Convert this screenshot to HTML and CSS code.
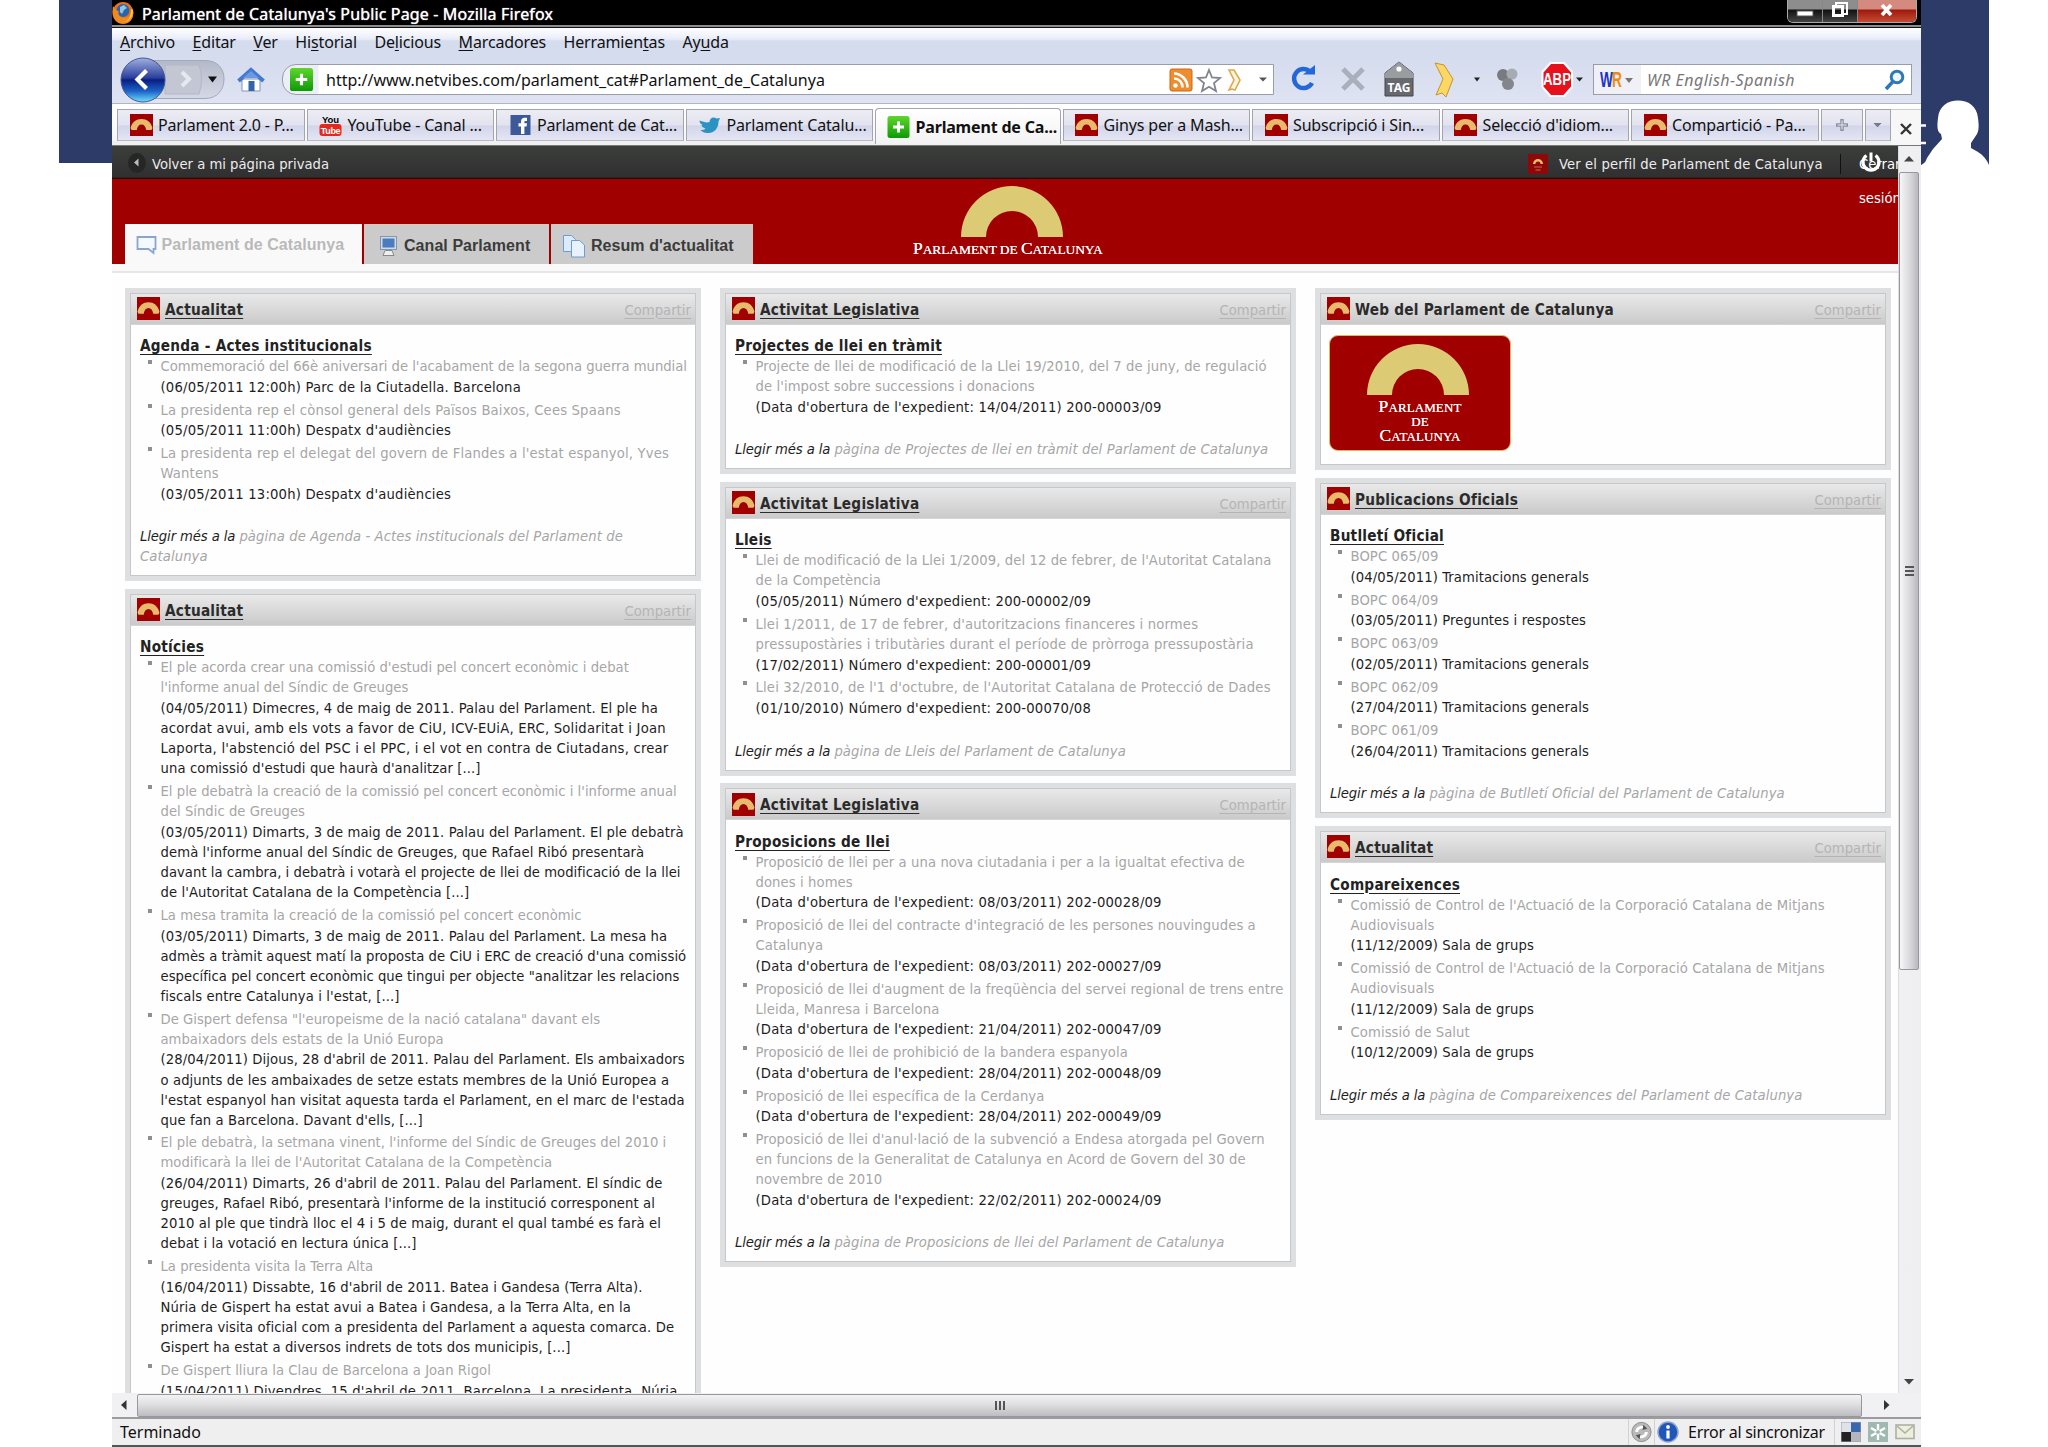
FILE: index.html
```html
<!DOCTYPE html>
<html lang="ca">
<head>
<meta charset="utf-8">
<title>Parlament de Catalunya's Public Page</title>
<link rel="stylesheet" href="styles.css">
</head>
<body>
<svg class="defs" aria-hidden="true">
  <defs>
    <linearGradient id="gBack" x1="0" y1="0" x2="0" y2="1"><stop offset="0" stop-color="#9fb0e0"/><stop offset=".45" stop-color="#2b3f9c"/><stop offset=".5" stop-color="#0a1d82"/><stop offset=".75" stop-color="#1b62c8"/><stop offset="1" stop-color="#6fe0fb"/></linearGradient>
    <linearGradient id="gPill" x1="0" y1="0" x2="0" y2="1"><stop offset="0" stop-color="#b4b9c9"/><stop offset="1" stop-color="#d5d9e6"/></linearGradient>
    <linearGradient id="gGreen" x1="0" y1="0" x2="0" y2="1"><stop offset="0" stop-color="#5fd62c"/><stop offset="1" stop-color="#0d9a06"/></linearGradient>
    <symbol id="arch" viewBox="0 0 22 22" preserveAspectRatio="none"><rect width="22" height="22" fill="#a00000"/><path d="M.5 14C2 8 6 5 11 5S20 8 21.500 14L20.500 16H15.500C15 12.500 13.500 10.500 11 10.500S7 12.500 6.500 16H1.500Z" fill="#e8ba6c"/></symbol>
    <symbol id="plus" viewBox="0 0 22 22"><rect width="22" height="22" rx="2.500" fill="url(#gGreen)"/><path d="M11 5.500v11M5.500 11h11" stroke="#fff" stroke-width="3"/></symbol>
    <symbol id="logo" viewBox="0 0 102 51" preserveAspectRatio="none"><path d="M0 51a51 51 0 0 1 102 0H77a26 26 0 0 0-52 0Z" fill="#dccb74"/></symbol>
  </defs>
</svg>

<div class="band band-left"></div>
<div class="band band-right">
  <svg class="person" viewBox="0 0 68 67" width="68" height="67"><path d="M0 67C4 65 5 63 6 60L12 51 21 41 20 36C16 34 16 28 17 20 18 8 27 2.500 37 2.500S56 8 57 20C58 28 58 32 56 36L50 45 50 50 57 54C62 57 66 62 68 67Z" fill="#fff"/><path d="M0 27.500h5M0 45h5" stroke="#fff" stroke-width="2.500"/></svg>
</div>

<main class="window">
  <header class="titlebar">
    <svg class="fox" width="22" height="24" viewBox="0 0 22 24"><ellipse cx="11" cy="12" rx="10.500" ry="11" fill="#e8731a"/><circle cx="11" cy="9.500" r="6.500" fill="#2b63ad"/><path d="M8 6l4-2 3 3-3 2-2 4-2-2z" fill="#8fc6e8"/><path d="M1 5C-1 17 5 23 12 22.500S22 17 21 9C19 15 16 17 12 16.500 8 17 5 13 7 10 4 10 3 8 1 5Z" fill="#f08a1e"/><path d="M21 9c0 8-5 12-9 12 4-1 7-5 7-13z" fill="#f9c440"/></svg>
    <h1>Parlament de Catalunya's Public Page - Mozilla Firefox</h1>
    <div class="winbtns">
      <span class="wb"><svg width="34" height="21" viewBox="0 0 34 21"><rect x="9" y="11" width="16" height="5" fill="#fff" stroke="#555"/></svg></span>
      <span class="wb"><svg width="34" height="21" viewBox="0 0 34 21"><path d="M13 6V3h11v11h-3" fill="none" stroke="#fff" stroke-width="2"/><rect x="10.500" y="6.500" width="9" height="9" fill="none" stroke="#fff" stroke-width="3"/></svg></span>
      <span class="wb wb-close"><svg width="58" height="21" viewBox="0 0 58 21"><path d="M24 5l9 10M33 5L24 15" stroke="#fff" stroke-width="3.600"/></svg></span>
    </div>
  </header>

  <nav class="menubar">
    <span><u>A</u>rchivo</span><span><u>E</u>ditar</span><span><u>V</u>er</span><span>Hi<u>s</u>torial</span><span>De<u>l</u>icious</span><span><u>M</u>arcadores</span><span>Herramien<u>t</u>as</span><span>Ay<u>u</u>da</span>
  </nav>

  <div class="toolbar">
    <svg class="backfwd" width="110" height="46" viewBox="0 0 110 46"><path d="M20 3.500H88C101 3.500 107 12 107 22S101 41.500 88 41.500H20Z" fill="url(#gPill)" stroke="#a3a8b8"/><path d="M48 8H82Q87 22 82 37H48Z" fill="#c3c7d3" stroke="#b4b8c6"/><path d="M65 15l7 7-7 7" fill="none" stroke="#e6e8ef" stroke-width="4"/><path d="M91 19.500h9l-4.500 6z" fill="#111"/><circle cx="26" cy="23" r="22" fill="url(#gBack)" stroke="#46558f"/><path d="M29.500 13.500L20.500 22.500l9 9" fill="none" stroke="#fff" stroke-width="4.200"/></svg>
    <svg class="home" width="28" height="26" viewBox="0 0 28 26"><path d="M5 12h18v12H5z" fill="#fff" stroke="#8794b5"/><path d="M1.500 14L14 3l12.500 11" fill="none" stroke="#4379cf" stroke-width="4"/><path d="M6 11l8-7 8 7z" fill="#6c9ae2"/><path d="M11.500 14h6v10h-6z" fill="#3366a8"/></svg>
    <div class="urlbar">
      <svg width="23" height="23"><use href="#plus"/></svg>
      <span class="url">http://www.netvibes.com/parlament_cat#Parlament_de_Catalunya</span>
      <svg class="urlicons" width="102" height="26" viewBox="0 0 102 26"><rect x="1" y="2" width="22" height="22" rx="2" fill="#ee8c2e" stroke="#c96a14"/><circle cx="6.500" cy="18.500" r="2.200" fill="#fff"/><path d="M5 11.500a8.500 8.500 0 0 1 8.500 9M5 6.500A14 14 0 0 1 18.500 20.500" fill="none" stroke="#fff" stroke-width="2.600"/><path d="M40 3l3 7.500 8 .6-6 5 2 7.900-7-4.300-7 4.300 2-7.900-6-5 8-.6z" fill="#fff" stroke="#80848c" stroke-width="1.800"/><path d="M60 3h5l6 10-5 10-3-1-3 1 5-10z" fill="#fff8e0" stroke="#dba84a" stroke-width="1.600"/><path d="M90 10.500h8l-4 4z" fill="#555"/></svg>
    </div>
    <svg class="tools" width="292" height="46" viewBox="0 0 292 46"><path d="M27 14.500A9.500 9.500 0 1 0 29 26" fill="none" stroke="#2368d8" stroke-width="4.500"/><path d="M20 17.500H32V8z" fill="#2368d8"/><path d="M60 12l20 20M80 12L60 32" stroke="#a9afbb" stroke-width="5"/><path d="M102 16l14-11 14 11v23h-28z" fill="#66696d" stroke="#44474b"/><path d="M102 16l14-11 14 11v5h-28z" fill="#9a9da0"/><circle cx="116" cy="12" r="2.600" fill="#fff"/><text x="116" y="35" class="t-tag">TAG</text><path d="M152 6l9 2 9 14-7 18-4-4-6 2 7-16z" fill="#fbd766" stroke="#c79428"/><path d="M191 20.500h6l-3 4z" fill="#222"/><circle cx="220" cy="18" r="6" fill="#777b80"/><circle cx="229" cy="17" r="5.500" fill="#a7abb2"/><circle cx="225" cy="27" r="6" fill="#83878c"/><path d="M267.500 6h13.500l8 9v15l-8 9h-13.500l-8-9V15z" fill="#e8101a" stroke="#fff" stroke-width="2"/><text x="274" y="28" class="t-abp" textLength="28" lengthAdjust="spacingAndGlyphs">ABP</text></svg>
    <svg class="drop" width="10" height="46" viewBox="0 0 10 46"><path d="M1 20.500h7l-3.500 4z" fill="#222"/></svg>
    <div class="search">
      <span class="engine"><b class="w">W</b><b class="r">R</b><svg width="10" height="8" viewBox="0 0 10 8"><path d="M1 2h8L5 7z" fill="#777"/></svg></span>
      <span class="ph">WR English-Spanish</span>
      <svg class="mag" width="22" height="22" viewBox="0 0 22 22"><circle cx="13" cy="8" r="5.800" fill="#eef6fd" stroke="#2f78b8" stroke-width="3"/><path d="M9 12.500L2 20" stroke="#2f78b8" stroke-width="3.600"/></svg>
    </div>
  </div>

  <div class="tabs">
    <div class="tab"><svg><use href="#arch"/></svg>Parlament 2.0 - P...</div>
    <div class="tab"><svg viewBox="0 0 22 22"><rect y="10" width="22" height="12" rx="3" fill="#e4281c"/><text x="11" y="8.500" class="t-you">You</text><text x="11" y="20" class="t-tube">Tube</text></svg>YouTube - Canal ...</div>
    <div class="tab"><svg viewBox="0 0 22 22"><rect x="1" y="1" width="20" height="20" fill="#3c5a99"/><path d="M11.500 20v-7.500H9V9.300h2.500V7.500C11.500 5 13 3.800 15 3.800h2.500v3.100h-1.600c-.8 0-1 .4-1 1v1.400h2.600l-.4 3.200h-2.200V20z" fill="#fff"/></svg>Parlament de Cat...</div>
    <div class="tab"><svg viewBox="0 0 22 22"><path d="M1 6.500C5 8 8 9 11 8c0-4 4-6 7-3.500L21.500 4 20 7.500C20 15 15 19.500 9 19 5.500 19 3 17.500 2 16c2.500 0 4-.6 5-1.600C4.500 14 3 12 3 11l1.500 0C2 10 1 8.500 1 6.500Z" fill="#2b93c4"/></svg>Parlament Catalu...</div>
    <div class="tab active"><svg><use href="#plus"/></svg>Parlament de Ca...</div>
    <div class="tab"><svg><use href="#arch"/></svg>Ginys per a Mash...</div>
    <div class="tab"><svg><use href="#arch"/></svg>Subscripció i Sin...</div>
    <div class="tab"><svg><use href="#arch"/></svg>Selecció d'idiom...</div>
    <div class="tab"><svg><use href="#arch"/></svg>Compartició - Pa...</div>
    <div class="tab mini new"><svg viewBox="0 0 14 14"><path d="M7 1v12M1 7h12" stroke="#8c90a0" stroke-width="3.500"/><path d="M7 2.500v9M2.500 7h9" stroke="#e4e6f0" stroke-width="1"/></svg></div>
    <div class="tab mini list"><svg viewBox="0 0 10 6"><path d="M0 0h10L5 5z" fill="#777b88"/></svg></div>
    <div class="closetab"><svg width="12" height="12" viewBox="0 0 12 12"><path d="M1 1l10 10M11 1L1 11" stroke="#333" stroke-width="2.400"/></svg></div>
  </div>

  <div class="view">
    <section class="page">
      <div class="netbar">
        <svg class="prev" width="20" height="24" viewBox="0 0 20 24"><ellipse cx="10" cy="12" rx="9" ry="10" fill="#262626"/><path d="M11.500 7.500v8L7 11.500z" fill="#bbb"/></svg>
        <span>Volver a mi página privada</span>
        <svg class="profile" width="20" height="20" viewBox="0 0 20 20"><rect width="20" height="20" fill="#8e0808"/><path d="M5 10a5 5 0 0 1 10 0h-2.500a2.500 2.500 0 0 0-5 0z" fill="#e8ba6c"/><path d="M6 13h8M7.500 16h5" stroke="#b34a3c" stroke-width="1.300"/></svg>
        <span class="pl">Ver el perfil de Parlament de Catalunya</span>
        <span class="logout"><svg width="22" height="22" viewBox="0 0 22 22"><path d="M6.500 4.500a8 8 0 1 0 9 0" fill="none" stroke="#fff" stroke-width="3.200"/><path d="M11 1.500v9" stroke="#fff" stroke-width="3"/></svg>Cerrar<br>sesión</span>
      </div>
      <div class="hero">
        <div class="ptab on"><svg width="22" height="20" viewBox="0 0 22 20"><path d="M1.500 2h18v12h-2v4l-5-4h-11z" fill="#f4f9ff" stroke="#8aa6cf" stroke-width="1.800"/></svg>Parlament de Catalunya</div>
        <div class="ptab"><svg width="20" height="22" viewBox="0 0 20 22"><rect x="1.500" y="1.500" width="16" height="13" fill="#cfdbe9" stroke="#8496ad"/><rect x="3.500" y="3.500" width="12" height="9" fill="#4b7cc0"/><path d="M4 20.500l2-5h7l2 5z" fill="#eee" stroke="#888"/></svg>Canal Parlament</div>
        <div class="ptab"><svg width="24" height="24" viewBox="0 0 24 24"><path d="M1.500 1.500h8l4 4v12h-12z" fill="#dcebfb" stroke="#6f9bd0"/><path d="M9.500 6.500h8l5 4.500v12h-13z" fill="#e8f2fd" stroke="#6f9bd0"/></svg>Resum d'actualitat</div>
        <div class="brand"><svg width="102" height="51"><use href="#logo"/></svg><span class="sc">P<small>ARLAMENT DE </small>C<small>ATALUNYA</small></span></div>
      </div>
      <div class="strip"></div>

      <div class="cols">
        <div class="col">
          <article class="card">
            <h2><svg><use href="#arch"/></svg><u>Actualitat</u><a>Compartir</a></h2>
            <h3>Agenda - Actes institucionals</h3>
            <ul>
              <li><a class="tight">Commemoració del 66è aniversari de l'acabament de la segona guerra mundial</a><p class="d">(06/05/2011 12:00h) Parc de la Ciutadella. Barcelona</p></li>
              <li><a class="loose">La presidenta rep el cònsol general dels Països Baixos, Cees Spaans</a><p class="d">(05/05/2011 11:00h) Despatx d'audiències</p></li>
              <li><a class="loose">La presidenta rep el delegat del govern de Flandes a l'estat espanyol, Yves<br>Wantens</a><p class="d">(03/05/2011 13:00h) Despatx d'audiències</p></li>
            </ul>
            <p class="more">Llegir més a la <a>pàgina de Agenda - Actes institucionals del Parlament de<br>Catalunya</a></p>
          </article>
          <article class="card news">
            <h2><svg><use href="#arch"/></svg><u>Actualitat</u><a>Compartir</a></h2>
            <h3>Notícies</h3>
            <ul>
              <li><a>El ple acorda crear una comissió d'estudi pel concert econòmic i debat<br>l'informe anual del Síndic de Greuges</a><p>(04/05/2011) Dimecres, 4 de maig de 2011. Palau del Parlament. El ple ha<br><span class="loose">acordat avui, amb els vots a favor de CiU, ICV-EUiA, ERC, Solidaritat i Joan<br>Laporta, l'abstenció del PSC i el PPC, i el vot en contra de Ciutadans, crear</span><br>una comissió d'estudi que haurà d'analitzar [...]</p></li>
              <li><a>El ple debatrà la creació de la comissió pel concert econòmic i l'informe anual<br>del Síndic de Greuges</a><p>(03/05/2011) Dimarts, 3 de maig de 2011. Palau del Parlament. El ple debatrà<br>demà l'informe anual del Síndic de Greuges, que Rafael Ribó presentarà<br><span class="tight">davant la cambra, i debatrà i votarà el projecte de llei de modificació de la llei</span><br>de l'Autoritat Catalana de la Competència [...]</p></li>
              <li><a>La mesa tramita la creació de la comissió pel concert econòmic</a><p>(03/05/2011) Dimarts, 3 de maig de 2011. Palau del Parlament. La mesa ha<br><span class="tight">admès a tràmit aquest matí la proposta de CiU i ERC de creació d'una comissió<br>específica pel concert econòmic que tingui per objecte "analitzar les relacions</span><br>fiscals entre Catalunya i l'estat, [...]</p></li>
              <li><a>De Gispert defensa "l'europeisme de la nació catalana" davant els<br>ambaixadors dels estats de la Unió Europa</a><p>(28/04/2011) Dijous, 28 d'abril de 2011. Palau del Parlament. Els ambaixadors<br>o adjunts de les ambaixades de setze estats membres de la Unió Europea a<br>l'estat espanyol han visitat aquesta tarda el Parlament, en el marc de l'estada<br>que fan a Barcelona. Davant d'ells, [...]</p></li>
              <li><a>El ple debatrà, la setmana vinent, l'informe del Síndic de Greuges del 2010 i<br>modificarà la llei de l'Autoritat Catalana de la Competència</a><p>(26/04/2011) Dimarts, 26 d'abril de 2011. Palau del Parlament. El síndic de<br>greuges, Rafael Ribó, presentarà l'informe de la institució corresponent al<br>2010 al ple que tindrà lloc el 4 i 5 de maig, durant el qual també es farà el<br>debat i la votació en lectura única [...]</p></li>
              <li><a>La presidenta visita la Terra Alta</a><p>(16/04/2011) Dissabte, 16 d'abril de 2011. Batea i Gandesa (Terra Alta).<br>Núria de Gispert ha estat avui a Batea i Gandesa, a la Terra Alta, en la<br>primera visita oficial com a presidenta del Parlament a aquesta comarca. De<br>Gispert ha estat a diversos indrets de tots dos municipis, [...]</p></li>
              <li><a>De Gispert lliura la Clau de Barcelona a Joan Rigol</a><p class="d">(15/04/2011) Divendres, 15 d'abril de 2011. Barcelona. La presidenta, Núria</p></li>
            </ul>
          </article>
        </div>

        <div class="col">
          <article class="card">
            <h2><svg><use href="#arch"/></svg><u>Activitat Legislativa</u><a>Compartir</a></h2>
            <h3>Projectes de llei en tràmit</h3>
            <ul>
              <li><a>Projecte de llei de modificació de la Llei 19/2010, del 7 de juny, de regulació<br>de l'impost sobre successions i donacions</a><p class="d">(Data d'obertura de l'expedient: 14/04/2011) 200-00003/09</p></li>
            </ul>
            <p class="more">Llegir més a la <a>pàgina de Projectes de llei en tràmit del Parlament de Catalunya</a></p>
          </article>
          <article class="card">
            <h2><svg><use href="#arch"/></svg><u>Activitat Legislativa</u><a>Compartir</a></h2>
            <h3>Lleis</h3>
            <ul>
              <li><a>Llei de modificació de la Llei 1/2009, del 12 de febrer, de l'Autoritat Catalana<br>de la Competència</a><p class="d">(05/05/2011) Número d'expedient: 200-00002/09</p></li>
              <li><a class="loose">Llei 1/2011, de 17 de febrer, d'autoritzacions financeres i normes<br>pressupostàries i tributàries durant el període de pròrroga pressupostària</a><p class="d">(17/02/2011) Número d'expedient: 200-00001/09</p></li>
              <li><a class="loose">Llei 32/2010, de l'1 d'octubre, de l'Autoritat Catalana de Protecció de Dades</a><p class="d">(01/10/2010) Número d'expedient: 200-00070/08</p></li>
            </ul>
            <p class="more">Llegir més a la <a>pàgina de Lleis del Parlament de Catalunya</a></p>
          </article>
          <article class="card">
            <h2><svg><use href="#arch"/></svg><u>Activitat Legislativa</u><a>Compartir</a></h2>
            <h3>Proposicions de llei</h3>
            <ul>
              <li><a>Proposició de llei per a una nova ciutadania i per a la igualtat efectiva de<br>dones i homes</a><p class="d">(Data d'obertura de l'expedient: 08/03/2011) 202-00028/09</p></li>
              <li><a>Proposició de llei del contracte d'integració de les persones nouvingudes a<br>Catalunya</a><p class="d">(Data d'obertura de l'expedient: 08/03/2011) 202-00027/09</p></li>
              <li><a>Proposició de llei d'augment de la freqüència del servei regional de trens entre<br>Lleida, Manresa i Barcelona</a><p class="d">(Data d'obertura de l'expedient: 21/04/2011) 202-00047/09</p></li>
              <li><a>Proposició de llei de prohibició de la bandera espanyola</a><p class="d">(Data d'obertura de l'expedient: 28/04/2011) 202-00048/09</p></li>
              <li><a>Proposició de llei específica de la Cerdanya</a><p class="d">(Data d'obertura de l'expedient: 28/04/2011) 202-00049/09</p></li>
              <li><a>Proposició de llei d'anul·lació de la subvenció a Endesa atorgada pel Govern<br>en funcions de la Generalitat de Catalunya en Acord de Govern del 30 de<br>novembre de 2010</a><p class="d">(Data d'obertura de l'expedient: 22/02/2011) 202-00024/09</p></li>
            </ul>
            <p class="more">Llegir més a la <a>pàgina de Proposicions de llei del Parlament de Catalunya</a></p>
          </article>
        </div>

        <div class="col">
          <article class="card web">
            <h2><svg><use href="#arch"/></svg><span>Web del Parlament de Catalunya</span><a>Compartir</a></h2>
            <div class="badge"><svg width="102" height="51"><use href="#logo"/></svg><span class="sc">P<small>ARLAMENT</small></span><span class="sc"><small>DE</small></span><span class="sc">C<small>ATALUNYA</small></span></div>
          </article>
          <article class="card">
            <h2><svg><use href="#arch"/></svg><u>Publicacions Oficials</u><a>Compartir</a></h2>
            <h3>Butlletí Oficial</h3>
            <ul>
              <li><a>BOPC 065/09</a><p>(04/05/2011) Tramitacions generals</p></li>
              <li><a>BOPC 064/09</a><p>(03/05/2011) Preguntes i respostes</p></li>
              <li><a>BOPC 063/09</a><p>(02/05/2011) Tramitacions generals</p></li>
              <li><a>BOPC 062/09</a><p>(27/04/2011) Tramitacions generals</p></li>
              <li><a>BOPC 061/09</a><p>(26/04/2011) Tramitacions generals</p></li>
            </ul>
            <p class="more">Llegir més a la <a>pàgina de Butlletí Oficial del Parlament de Catalunya</a></p>
          </article>
          <article class="card">
            <h2><svg><use href="#arch"/></svg><u>Actualitat</u><a>Compartir</a></h2>
            <h3>Compareixences</h3>
            <ul>
              <li><a>Comissió de Control de l'Actuació de la Corporació Catalana de Mitjans<br>Audiovisuals</a><p>(11/12/2009) Sala de grups</p></li>
              <li><a>Comissió de Control de l'Actuació de la Corporació Catalana de Mitjans<br>Audiovisuals</a><p>(11/12/2009) Sala de grups</p></li>
              <li><a>Comissió de Salut</a><p>(10/12/2009) Sala de grups</p></li>
            </ul>
            <p class="more">Llegir més a la <a>pàgina de Compareixences del Parlament de Catalunya</a></p>
          </article>
        </div>
      </div>
    </section>
    <div class="vscroll">
      <svg width="10" height="6" viewBox="0 0 10 6"><path d="M0 5.500h10L5 0z" fill="#444"/></svg>
      <div class="vthumb"><i></i><i></i><i></i></div>
      <svg width="10" height="6" viewBox="0 0 10 6"><path d="M0 0h10L5 5.500z" fill="#444"/></svg>
    </div>
  </div>

  <div class="hscroll">
    <svg width="6" height="10" viewBox="0 0 6 10"><path d="M5.500 0v10L0 5z" fill="#333"/></svg>
    <div class="hthumb"><i></i><i></i><i></i></div>
    <svg width="6" height="10" viewBox="0 0 6 10"><path d="M0 0v10L5.500 5z" fill="#333"/></svg>
  </div>
  <footer class="status">
    <span class="done">Terminado</span>
    <svg class="cell" width="26" height="24" viewBox="0 0 26 24"><circle cx="13" cy="12" r="10" fill="#b9b9b9" stroke="#8a8a8a"/><path d="M8 12a5 5 0 0 1 8-4M18 12a5 5 0 0 1-8 4" fill="none" stroke="#fff" stroke-width="3"/><path d="M15 4.500l4 4-5 1.500zM11 19.500l-4-4 5-1.500z" fill="#555"/></svg>
    <span class="cell sync"><svg width="22" height="22" viewBox="0 0 22 22"><circle cx="11" cy="11" r="10" fill="#1f56b8" stroke="#8aa3d0" stroke-width="1.500"/><circle cx="11" cy="6" r="1.900" fill="#fff"/><path d="M11 9.500v8" stroke="#fff" stroke-width="3.200"/></svg>Error al sincronizar</span>
    <span class="cell tray">
      <svg width="20" height="20" viewBox="0 0 20 20"><rect width="20" height="20" fill="#fff"/><path d="M0 0h10v10H0z" fill="#dfe2e8"/><path d="M10 0h10v10H10z" fill="#3a66b0"/><path d="M0 10h10v10H0z" fill="#222"/><path d="M10 10h10v10H10z" fill="#b3b6bc"/><path d="M0 0h20v20H0z" fill="none" stroke="#9aa0ab"/></svg>
      <svg width="20" height="20" viewBox="0 0 20 20"><rect width="20" height="20" fill="#9fb8b0"/><path d="M10 2v16M3 6l14 8M17 6L3 14" stroke="#fff" stroke-width="2.400"/><circle cx="10" cy="10" r="2" fill="#9fb8b0"/></svg>
      <svg width="20" height="16" viewBox="0 0 20 16"><rect x="1" y="1" width="18" height="13.500" fill="#eeeedd" stroke="#adb0a2" stroke-width="1.600"/><path d="M2 2l8 7 8-7" fill="none" stroke="#adb0a2" stroke-width="1.600"/></svg>
    </span>
  </footer>
</main>
</body>
</html>
```

FILE: styles.css
```css
* { box-sizing: border-box; margin: 0; padding: 0; }
body { position: relative; width: 2048px; height: 1447px; overflow: hidden; background: #fff; font-family: "Noto Sans", sans-serif; font-size: 16px; letter-spacing: -.15px; color: #111; }
.defs { position: absolute; width: 0; height: 0; }
svg { display: block; flex: none; }

.band { position: absolute; top: 0; background: #2d3b69; }
.band-left { left: 59px; width: 53px; height: 163px; }
.band-right { left: 1921px; width: 68px; height: 165px; }
.person { position: absolute; left: 0; bottom: 0; }

.window { position: relative; display: flex; flex-direction: column; width: 1809px; height: 1447px; margin-left: 112px; white-space: nowrap; background: #fff; }

.titlebar { display: flex; align-items: flex-start; height: 28px; background: linear-gradient(#000 0 25px, #8d8d8d 25px 27px, #111 27px); }
.fox { margin-top: 1px; }
.titlebar h1 { flex: 1; margin-left: 8px; font-size: 16px; font-weight: 400; line-height: 28px; letter-spacing: .14px; color: #fff; text-shadow: 0 0 1px #fff; }
.winbtns { display: flex; height: 23px; margin-right: 4px; border: 1px solid #aaa; border-top: 0; border-radius: 0 0 6px 6px; overflow: hidden; }
.wb { background: linear-gradient(#8d8d8d 0 9px, #111 10px, #444); border-right: 1px solid #888; }
.wb-close { border: 0; background: linear-gradient(#d58a80 0 9px, #9d1a0c 10px, #c64a34); }

.menubar { display: flex; gap: 17.500px; height: 28px; padding-left: 8px; line-height: 29px; background: linear-gradient(#fff, #e9edf9 11px, #d5dcee 13px); }
.menubar u { text-underline-offset: 2px; }

.toolbar { display: flex; align-items: center; height: 48px; background: linear-gradient(#d5dcee, #dfe3f2); border-bottom: 1px solid #b2b6c3; }
.backfwd { margin-left: 5px; }
.home { margin-left: 10px; }
.urlbar { display: flex; align-items: center; width: 992px; height: 31px; margin-left: 17px; padding-left: 7px; background: linear-gradient(90deg, #edeff6 35px, #fff 36px); border: 1px solid #9a9da8; border-radius: 14px 0 0 14px; }
.url { flex: 1; margin-left: 13px; letter-spacing: 0; }
.urlicons { margin-right: 2px; }
.tools { margin-left: 9px; }
.t-tag { font: bold 12px "Noto Sans", sans-serif; fill: #fff; text-anchor: middle; letter-spacing: 0; }
.t-abp { font: bold 16px "Liberation Sans", sans-serif; fill: #fff; text-anchor: middle; letter-spacing: 0; }
.search { display: flex; align-items: center; width: 319px; height: 31px; margin-left: 8px; background: #fff; border: 1px solid #9a9da8; }
.engine { display: flex; align-items: center; width: 47px; height: 29px; padding-left: 6px; background: #eff1f7; }
.engine b { font: bold 22px "Liberation Sans", sans-serif; transform: scaleX(.62); transform-origin: left; letter-spacing: 0; }
.engine .w { width: 12px; color: #2033c8; }
.engine .r { width: 12px; color: #f08a10; }
.ph { flex: 1; padding-left: 6px; font-style: italic; letter-spacing: .49px; color: #777; }
.mag { margin-right: 5px; }

.tabs { display: flex; align-items: flex-start; height: 42px; padding: 5px 0 0 5px; background: linear-gradient(#fff, #f7f7fb 36px, #f0f0f0 37px 41px, #777 41px); }
.tab { display: flex; flex: none; align-items: center; gap: 5.500px; width: 187.500px; height: 32px; margin-right: 2px; padding-left: 11.500px; background: linear-gradient(#ececf3, #e2e3ef 15px, #d2d5ea 16px, #e4e6f4); border: 1px solid #a3a5ae; border-bottom-color: #b8bac4; overflow: hidden; }
.tab svg { width: 23px; height: 22px; }
.tab.active { width: 185.500px; height: 36px; margin-top: -1px; padding-left: 11px; background: linear-gradient(#fff, #f2f2f2); border-radius: 4px 4px 0 0; border-bottom: 0; font-weight: 700; letter-spacing: -.18px; }
.t-you { font: bold 9.500px "Liberation Sans", sans-serif; text-anchor: middle; letter-spacing: 0; }
.t-tube { font: bold 9px "Liberation Sans", sans-serif; fill: #fff; text-anchor: middle; letter-spacing: -.3px; }
.tab.mini { padding: 0; justify-content: center; }
.tab.new { width: 42px; }
.tab.new svg { width: 14px; height: 14px; }
.tab.list { width: 26px; margin-right: 0; }
.tab.list svg { width: 9px; height: 5px; }
.closetab { display: flex; align-items: center; justify-content: center; flex: 1; height: 36px; padding-top: 2px; background: #f7f7f7; border-top: 1px solid #ccc; }

.view { display: flex; height: 1247px; }
.page { width: 1786px; overflow: hidden; background: #fefefe; font-family: "DejaVu Sans Condensed", "DejaVu Sans", sans-serif; font-size: 14.670px; letter-spacing: 0; line-height: 20px; }
.netbar { position: relative; z-index: 1; display: flex; align-items: center; height: 33px; padding-left: 15px; background: linear-gradient(#3b3d3b, #303030 31px, #1a0000 33px); color: #ececec; }
.netbar > span { margin-top: 3px; }
.prev { margin-right: 5px; }
.profile { margin: 2px 11px 0 auto; }
.netbar .pl { width: 282px; margin-right: 18px; border-right: 1px solid #111; letter-spacing: .12px; }
.netbar .logout { align-self: flex-start; position: relative; width: 39px; height: 20px; margin: 1px 0 0; line-height: 34px; color: #fff; }
.logout svg { position: absolute; left: 1px; top: 4px; }

.hero { position: relative; display: flex; align-items: flex-end; gap: 2px; height: 85px; padding-left: 13px; background: #a00000; }
.ptab { display: flex; align-items: center; height: 40px; padding-top: 3px; background: #cbcbcb; font: bold 16px "Liberation Sans", sans-serif; letter-spacing: .06px; color: #3b3b3b; border-top: 1px solid #d9c9b4; }
.ptab svg { margin-right: 5px; }
.ptab:nth-child(1) { width: 237px; padding: 1px 0 0 11px; background: #f9f9f9; border-top: 0; color: #b9b9b9; }
.ptab:nth-child(1) svg { margin-right: 3.500px; }
.ptab:nth-child(2) { width: 185px; padding-left: 15px; }
.ptab:nth-child(3) { width: 202px; padding-left: 11px; }
.brand { position: absolute; left: 801px; top: 7px; width: 189px; }
.brand svg { margin: 0 auto; position: relative; left: 4px; }
.sc { font: 17.500px/1 "Liberation Serif", serif; color: #fff; text-shadow: 0 0 .5px #fff; }
.sc small { font-size: 13.500px; }
.brand .sc { display: block; margin-top: 3px; letter-spacing: -.1px; }
.strip { height: 9px; background: #f9f9f9; border-bottom: 2px solid #e6e6e6; }

.cols { display: flex; padding: 14.500px 0 0 12.500px; gap: 18.500px; }
.col { display: flex; flex-direction: column; gap: 7.700px; width: 576.500px; }
.card { padding-bottom: 10px; background: #fefefe; border: 5px solid #dedfe0; box-shadow: inset 0 0 0 1px #c6c7c9; }
.card h2 { display: flex; align-items: center; height: 32px; padding: 2px 4px 0 7px; background: linear-gradient(#e9e9e9, #cacacb); border: 1px solid #c6c7c9; border-bottom-color: #d5d5d5; font-size: 15.200px; letter-spacing: .24px; color: #2b2b2b; }
.card h2 svg { width: 23px; height: 23px; margin: -2px 5.500px 0 -1px; }
.card h2 u { text-underline-offset: 3px; }
.card h2 a { margin-left: auto; font-size: 14.670px; font-weight: 400; letter-spacing: .04px; color: #b4b4b4; text-decoration: underline; text-underline-offset: 3px; }
.card h3 { margin: 11.600px 0 0 10.500px; font-size: 15.200px; line-height: 20px; letter-spacing: .24px; text-decoration: underline; text-underline-offset: 3px; color: #222; }
.card ul { list-style: none; padding-left: 31px; }
.card li { position: relative; margin-bottom: 2.800px; }
.card li::before { content: ""; position: absolute; left: -13px; top: 4px; width: 4px; height: 4px; background: #8f8f8f; }
.card li a { display: block; letter-spacing: .09px; color: #a6a6a6; }
.card li a.tight { letter-spacing: -.02px; }
.card li a.loose { letter-spacing: .17px; }
.card li p { margin-top: .700px; }
.card p { letter-spacing: .1px; color: #1d1d1d; }
.card p.d { letter-spacing: .2px; }
.news li a { letter-spacing: .02px; }
.news li { line-height: 20.040px; }
.news p .loose { letter-spacing: .22px; }
.news p .tight { letter-spacing: .04px; }
.card .more { margin: 22.400px 0 0 10.500px; font-style: italic; letter-spacing: -.1px; }
.more a { letter-spacing: .1px; color: #a6a6a6; }
.web { padding-bottom: 8.500px; }
.badge { display: flex; flex-direction: column; align-items: center; width: 182px; height: 116px; margin: 10px 0 6px 9.500px; padding: 8px 0 0; background: #a00000; border: 1.500px solid #e3b55e; border-radius: 9px; }
.badge .sc { height: 14.500px; line-height: 16px; letter-spacing: .1px; }
.badge svg { margin: 0 5px 3px 0; }
.badge .sc small { font-size: 13px; }

.vscroll { display: flex; flex-direction: column; align-items: center; flex: 1; padding: 10px 2px 8px 0; background: linear-gradient(90deg, #f0eff2, #efeef0); border-left: 1px solid #ddd; }
.vthumb { display: flex; flex-direction: column; align-items: center; justify-content: center; gap: 2px; width: 20px; height: 798px; margin: 10px 0 auto; background: linear-gradient(90deg, #f6f6f6, #dcdce0 50%, #b9b8bf); border: 1px solid #98979d; border-radius: 2px; }
.vthumb i { width: 9px; height: 2px; background: #555; }
.hscroll { display: flex; align-items: center; height: 26px; padding: 0 31px 0 9px; background: #f1f0f2; border-bottom: 2px solid #9c9ca0; }
.hthumb { display: flex; align-items: center; justify-content: center; gap: 2px; width: 1725px; height: 23px; margin: 0 auto 0 10px; background: linear-gradient(#f3f3f4, #dfdfe1 45%, #bdbcc0); border: 1px solid #98979d; border-radius: 2px; }
.hthumb i { width: 2px; height: 9px; background: #555; }
.status { display: flex; align-items: center; height: 28px; padding-left: 8px; background: #f0eff0; border-bottom: 2px solid #555; }
.done { flex: 1; letter-spacing: 0; }
.cell { display: flex; align-items: center; height: 26px; border-left: 1px solid #d2d2d4; }
.sync { gap: 9px; width: 180px; padding-left: 2px; letter-spacing: -.26px; }
.tray { gap: 7px; width: 87px; padding-left: 6px; }
```
